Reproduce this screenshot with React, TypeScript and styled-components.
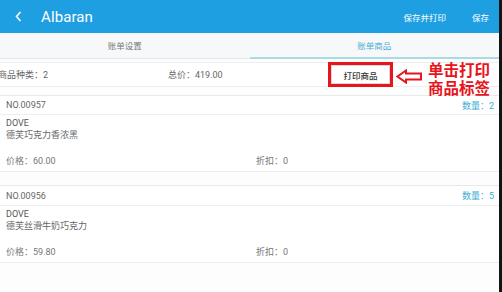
import styled, { createGlobalStyle } from 'styled-components';

const GlobalStyle = createGlobalStyle`
  body {
    margin: 0;
    font-family: Roboto, 'Noto Sans CJK SC', sans-serif;
    background: #ffffff;
  }
`;

const Frame = styled.div`
  display: flex;
  width: 502px;
  height: 292px;
  overflow: hidden;
`;

const Screen = styled.div`
  flex: 1;
  display: flex;
  flex-direction: column;
  background: #fdfdfd;
`;

const Bezel = styled.div`
  width: 3px;
  background: #141414;
`;

const Header = styled.div`
  height: 33px;
  flex-shrink: 0;
  display: flex;
  align-items: center;
  padding: 0 10px 0 15px;
  background: #1e9fe2;
  color: #ffffff;
`;

const Title = styled.span`
  margin-left: 19px;
  font-size: 15px;
  letter-spacing: 0.1px;
`;

const Actions = styled.div`
  margin-left: auto;
  display: flex;
  gap: 26px;
  font-size: 8.5px;
`;

const Tabs = styled.div`
  height: 26px;
  flex-shrink: 0;
  display: grid;
  grid-template-columns: 1fr 1fr;
  background: #f6f8f9;
  border-bottom: 1px solid #e3e8ea;
  box-sizing: border-box;
`;

const Tab = styled.div<{ $active?: boolean }>`
  display: flex;
  align-items: center;
  justify-content: center;
  font-size: 8.5px;
  color: ${(p) => (p.$active ? '#4aaed3' : '#7a7a7a')};
  border-bottom: 2px solid ${(p) => (p.$active ? '#a9dbe2' : 'transparent')};
  margin-bottom: -1px;
`;

const Summary = styled.div`
  position: relative;
  margin-top: 3px;
  height: 25px;
  flex-shrink: 0;
  display: grid;
  grid-template-columns: 168px 163px 1fr;
  align-items: center;
  background: #ffffff;
  border-top: 1px solid #eceef0;
  border-bottom: 1px solid #eceef0;
  box-sizing: border-box;
  font-size: 9px;
  color: #666;
`;

const Kinds = styled.span`
  margin-left: -2px;
`;

const PrintButton = styled.div`
  width: 59px;
  height: 19px;
  display: flex;
  align-items: center;
  justify-content: center;
  background: #ffffff;
  box-sizing: border-box;
  border: 1px solid #d8d8d8;
  color: #333;
  font-size: 8.5px;
  font-weight: 500;
  outline: 3px solid #e5161d;
`;

const Arrow = styled.svg`
  position: absolute;
  left: 396px;
  top: 6px;
`;

const Callout = styled.div`
  position: absolute;
  left: 428px;
  top: -3px;
  display: flex;
  flex-direction: column;
  color: #e8141b;
  font-family: 'Noto Sans CJK SC', sans-serif;
  font-size: 15.5px;
  font-weight: 700;
  line-height: 18px;
`;

const Item = styled.div<{ $gap: number }>`
  margin-top: ${(p) => p.$gap}px;
  background: #ffffff;
  color: #666;
  font-size: 9px;
`;

const ItemHead = styled.div<{ $h: number }>`
  height: ${(p) => p.$h}px;
  display: flex;
  align-items: center;
  justify-content: space-between;
  padding: 0 5px 0 6px;
  border-top: 1px solid #e7e9ea;
  border-bottom: 1px solid #eceeef;
`;

const Qty = styled.span`
  color: #42aed6;
`;

const ItemBody = styled.div`
  height: 57px;
  box-sizing: border-box;
  display: flex;
  flex-direction: column;
  padding: 2px 6px 4px;
  border-bottom: 1px solid #eceeef;
  line-height: 12px;
`;

const Brand = styled.div`
  color: #555;
`;

const PriceRow = styled.div`
  margin-top: auto;
  display: grid;
  grid-template-columns: 250px 1fr;
  color: #777;
`;

const items = [
  { no: 'NO.00957', qty: 2, brand: 'DOVE', name: '德芙巧克力香浓黑', price: '60.00', discount: 0, gap: 8, head: 18 },
  { no: 'NO.00956', qty: 5, brand: 'DOVE', name: '德芙丝滑牛奶巧克力', price: '59.80', discount: 0, gap: 13, head: 19 },
];

export default function App() {
  return (
    <>
      <GlobalStyle />
      <Frame>
        <Screen>
          <Header>
            <svg width="7" height="11" viewBox="0 0 7 11">
              <path d="M5.5 1 L1.5 5.5 L5.5 10" fill="none" stroke="#fff" strokeWidth="1.6" />
            </svg>
            <Title>Albaran</Title>
            <Actions>
              <span>保存并打印</span>
              <span>保存</span>
            </Actions>
          </Header>
          <Tabs>
            <Tab>账单设置</Tab>
            <Tab $active>账单商品</Tab>
          </Tabs>
          <Summary>
            <Kinds>商品种类：2</Kinds>
            <span>总价：419.00</span>
            <PrintButton>打印商品</PrintButton>
            <Arrow width="27" height="15" viewBox="0 0 27 15">
              <path
                d="M1.5 7.5 L10 1.5 L10 4.5 L25 4.5 L25 10.5 L10 10.5 L10 13.5 Z"
                fill="#fff"
                stroke="#e5161d"
                strokeWidth="2"
              />
            </Arrow>
            <Callout>
              <span>单击打印</span>
              <span>商品标签</span>
            </Callout>
          </Summary>
          {items.map((it) => (
            <Item key={it.no} $gap={it.gap}>
              <ItemHead $h={it.head}>
                <span>{it.no}</span>
                <Qty>数量：{it.qty}</Qty>
              </ItemHead>
              <ItemBody>
                <Brand>{it.brand}</Brand>
                <div>{it.name}</div>
                <PriceRow>
                  <span>价格：{it.price}</span>
                  <span>折扣：{it.discount}</span>
                </PriceRow>
              </ItemBody>
            </Item>
          ))}
        </Screen>
        <Bezel />
      </Frame>
    </>
  );
}
